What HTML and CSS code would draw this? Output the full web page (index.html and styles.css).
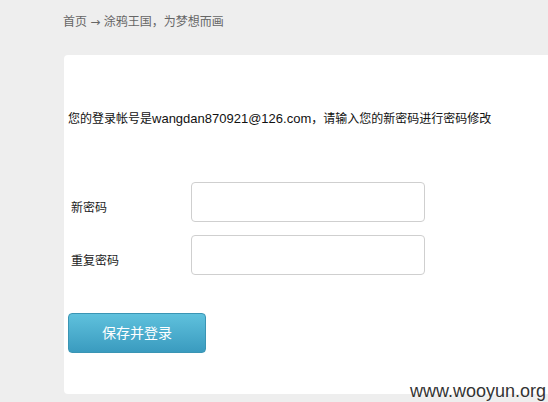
FILE: index.html
```html
<!DOCTYPE html>
<html>
	<head>
		<meta charset="utf-8" />
		<title>修改密码</title>
		<link rel="stylesheet" href="styles.css">
	</head>
	<body>
		<div class="crumb">首页 <span class="arr">→</span> 涂鸦王国，为梦想而画</div>
		<div class="box">
			<p class="notice">您的登录帐号是<span class="mail">wangdan870921@126.com</span>，请输入您的新密码进行密码修改</p>
			<div class="row">
				<label>新密码</label>
				<input type="password" class="txt">
			</div>
			<div class="row">
				<label>重复密码</label>
				<input type="password" class="txt">
			</div>
			<a href="javascript:;" class="btn">保存并登录</a>
		</div>
		<div class="mark">www.wooyun.org</div>
	</body>
</html>
```
FILE: styles.css
```css
*{
	margin:0;
	padding:0;
	text-decoration:none;
}
html,body{
	height:100%;
	overflow:hidden;
}
body{
	background:#eeeeee;
	font-family:"Liberation Sans","Noto Sans CJK SC",sans-serif;
	font-size:12px;
	color:#111;
	position:relative;
}
.crumb{
	padding:13px 0 0 63px;
	height:42px;
	line-height:18px;
	color:#666;
}
.arr{
	font-family:"DejaVu Sans",sans-serif;
	font-size:12px;
}
.box{
	margin-left:64px;
	height:339px;
	background:#fff;
	border-radius:4px 0 0 4px;
	padding-top:54px;
	box-sizing:border-box;
}
.notice{
	padding-left:4px;
	line-height:20px;
	margin-bottom:53px;
}
.mail{
	font-size:13px;
}
.row{
	display:flex;
	align-items:center;
	margin-bottom:13px;
}
.row label{
	width:127px;
	padding:12px 0 0 7px;
	box-sizing:border-box;
	line-height:16px;
	color:#222;
}
.txt{
	width:234px;
	height:40px;
	box-sizing:border-box;
	border:1px solid #cfcfcf;
	border-radius:4px;
	background:#fff;
	outline:none;
}
.btn{
	display:block;
	margin:38px 0 0 4px;
	width:138px;
	height:40px;
	box-sizing:border-box;
	line-height:38px;
	text-align:center;
	font-size:14px;
	color:#fff;
	border:1px solid #3a95b4;
	border-radius:4px;
	background:linear-gradient(#5fc1dd,#3a9bbf);
}
.mark{
	position:absolute;
	right:2px;
	bottom:1px;
	font-family:"Liberation Sans",sans-serif;
	font-size:18px;
	line-height:20px;
	color:#333;
	text-shadow:0 0 2px #fff;
}
```
